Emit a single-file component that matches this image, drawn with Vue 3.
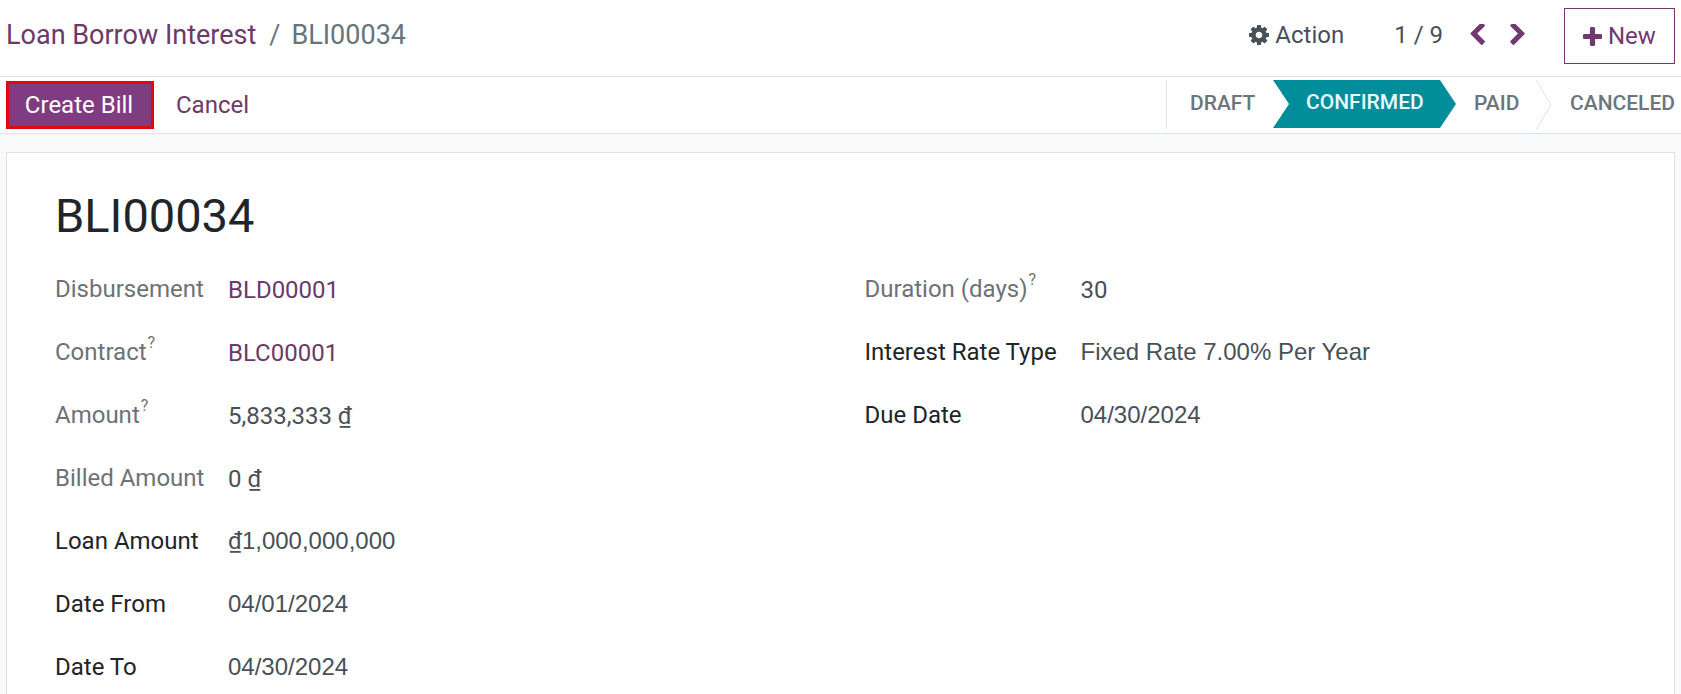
<template>
  <div class="page">
    <header class="top">
      <nav class="crumbs">
        <span class="crumb-link">Loan Borrow Interest</span>
        <span class="crumb-sep">/</span>
        <span class="crumb-cur">BLI00034</span>
      </nav>
      <div class="top-right">
        <span class="action">
          <svg class="gear" viewBox="128 128 1536 1536" width="20" height="20"><path fill="#495057" d="M1152 896q0-106-75-181t-181-75-181 75-75 181 75 181 181 75 181-75 75-181zm512-109v222q0 12-8 23t-20 13l-185 28q-19 54-39 91 35 50 107 138 10 12 10 25t-9 23q-27 37-99 108t-94 71q-12 0-26-9l-138-108q-44 23-91 38-16 136-29 186-7 28-36 28h-222q-14 0-24.500-8.500t-11.500-21.500l-28-184q-49-16-90-37l-141 107q-10 9-25 9-14 0-25-11-126-114-165-168-7-10-7-23 0-12 8-23 15-21 51-66.500t54-70.500q-27-50-41-99l-183-27q-13-2-21-12.500t-8-23.500v-222q0-12 8-23t19-13l186-28q14-46 39-92-40-57-107-138-10-12-10-24 0-10 9-23 26-36 98.500-107.500t94.500-71.500q13 0 26 10l138 107q44-23 91-38 16-136 29-186 7-28 36-28h222q14 0 24.500 8.500t11.500 21.500l28 184q49 16 90 37l142-107q9-9 24-9 13 0 25 10 129 119 165 170 7 8 7 22 0 12-8 23-15 21-51 66.500t-54 70.500q26 50 41 98l183 28q13 2 21 12.500t8 23.500z"/></svg>
          Action
        </span>
        <span class="pager">1 / 9</span>
        <svg class="chev" viewBox="384 148 1062 1496" width="15" height="21"><path fill="#71396f" d="M1427 301l-531 531 531 531q19 19 19 45t-19 45l-166 166q-19 19-45 19t-45-19l-742-742q-19-19-19-45t19-45l742-742q19-19 45-19t45 19l166 166q19 19 19 45t-19 45z"/></svg>
        <svg class="chev chev2" viewBox="346 148 1040 1496" width="15" height="21"><path fill="#71396f" d="M1363 877l-742 742q-19 19-45 19t-45-19l-166-166q-19-19-19-45t19-45l531-531-531-531q-19-19-19-45t19-45l166-166q19-19 45-19t45 19l742 742q19 19 19 45t-19 45z"/></svg>
        <button class="new">
          <svg viewBox="192 128 1408 1408" width="19" height="19"><path fill="#71396f" d="M1600 736v192q0 40-28 68t-68 28h-416v416q0 40-28 68t-68 28h-192q-40 0-68-28t-28-68v-416h-416q-40 0-68-28t-28-68v-192q0-40 28-68t68-28h416v-416q0-40 28-68t68-28h192q40 0 68 28t28 68v416h416q40 0 68 28t28 68z"/></svg>
          New
        </button>
      </div>
    </header>
    <div class="bar">
      <div class="bar-left">
        <button class="primary">Create Bill</button>
        <button class="link">Cancel</button>
      </div>
      <div class="status">
        <span class="st st-draft">DRAFT</span>
        <span class="st st-conf">CONFIRMED</span>
        <span class="st st-paid">PAID</span>
        <svg class="sep" viewBox="0 0 18 50" width="18" height="50"><path d="M1 0 16 25 1 50" fill="none" stroke="#dee2e6" stroke-width="1"/></svg>
        <span class="st st-canc">CANCELED</span>
      </div>
    </div>
    <main class="content">
      <section class="sheet">
        <h1 class="title">BLI00034</h1>
        <div class="cols">
          <div class="col">
            <div v-for="r in left" :key="r.label" class="row">
              <span class="label" :class="{ muted: r.muted }">{{ r.label }}<sup v-if="r.help">?</sup></span>
              <span class="value" :class="{ vlink: r.link, alt: r.alt }"><u v-if="r.pre" class="cur">₫</u>{{ r.value }}<template v-if="r.cur">&nbsp;<u class="cur">₫</u></template></span>
            </div>
          </div>
          <div class="col col2">
            <div v-for="r in right" :key="r.label" class="row">
              <span class="label label2" :class="{ muted: r.muted }">{{ r.label }}<sup v-if="r.help">?</sup></span>
              <span class="value" :class="{ alt: r.alt }">{{ r.value }}</span>
            </div>
          </div>
        </div>
      </section>
    </main>
  </div>
</template>

<script setup>
const left = [
  { label: 'Disbursement', value: 'BLD00001', muted: true, link: true },
  { label: 'Contract', value: 'BLC00001', muted: true, help: true, link: true },
  { label: 'Amount', value: '5,833,333', muted: true, help: true, cur: true },
  { label: 'Billed Amount', value: '0', muted: true, cur: true },
  { label: 'Loan Amount', value: '1,000,000,000', pre: true, alt: true },
  { label: 'Date From', value: '04/01/2024', alt: true },
  { label: 'Date To', value: '04/30/2024', alt: true }
]
const right = [
  { label: 'Duration (days)', value: '30', muted: true, help: true },
  { label: 'Interest Rate Type', value: 'Fixed Rate 7.00% Per Year', alt: true },
  { label: 'Due Date', value: '04/30/2024', alt: true }
]
</script>

<style>
html, body { margin: 0; background: #fff; overflow: hidden; }
</style>

<style scoped>
.page {
  width: 1681px;
  height: 694px;
  overflow: hidden;
  font-family: Roboto, sans-serif;
  color: #212529;
  background: #f8f9fa;
}
.top {
  height: 76px;
  background: #fff;
  border-bottom: 1px solid #dee2e6;
  display: flex;
  align-items: center;
  justify-content: space-between;
  padding-left: 6px;
  box-sizing: content-box;
}
.crumbs { font-size: 27px; display: flex; margin-top: -7px; }
.crumb-link { color: #6b3a68; }
.crumb-sep { color: #6c757d; margin: 0 11px 0 13px; }
.crumb-cur { color: #66757c; }
.top-right { display: flex; align-items: center; font-size: 24px; color: #495057; height: 100%; }
.action { display: flex; align-items: center; gap: 6px; margin-right: 50px; margin-top: -6px; }
.pager { margin-right: 27px; margin-top: -6px; }
.chev { margin-top: -7px; }
.chev2 { margin-left: 25px; margin-right: 39px; }
.new {
  width: 111px;
  height: 56px;
  margin: -4px 6px 0 0;
  background: #fff;
  border: 1px solid #71396f;
  color: #71396f;
  font: inherit;
  display: flex;
  align-items: center;
  gap: 6px;
  padding: 0 0 0 18px;
  box-sizing: border-box;
}
.bar {
  height: 56px;
  background: #fff;
  border-bottom: 1px solid #dee2e6;
  display: flex;
  justify-content: space-between;
  align-items: flex-start;
}
.bar-left { display: flex; align-items: center; margin-left: 6px; margin-top: 4px; }
.primary {
  width: 148px;
  height: 48px;
  box-sizing: border-box;
  background: #7f3c80;
  border: 3px solid #e30713;
  color: #fff;
  font: inherit;
  font-size: 24px;
  padding: 0 2px 0 0;
}
.link {
  background: none;
  border: 0;
  font: inherit;
  font-size: 24px;
  color: #6b3a68;
  padding: 0;
  margin-left: 22px;
}
.status {
  display: flex;
  align-items: center;
  height: 49px;
  margin-top: 3px;
  border-left: 1px solid #dee2e6;
  font-size: 21px;
  font-weight: 500;
  color: #6c757d;
  width: 515px;
  box-sizing: border-box;
}
.st { display: block; white-space: nowrap; }
.st-draft { margin: 0 0 4px 23px; width: 83px; }
.st-conf {
  width: 183px;
  height: 48px;
  align-self: flex-start;
  line-height: 45px;
  box-sizing: border-box;
  padding-left: 33px;
  background: #018d99;
  color: #e9fbfc;
  clip-path: polygon(0 0, 167px 0, 100% 50%, 167px 100%, 0 100%, 16px 50%);
}
.st-paid { margin: 0 0 4px 18px; width: 61px; }
.sep { flex: none; }
.st-canc { margin: 0 0 4px 17px; }
.content { padding: 18px 0 0 6px; }
.sheet {
  background: #fff;
  border: 1px solid #dee2e6;
  width: 1669px;
  height: 600px;
  box-sizing: border-box;
  padding: 0 0 0 48px;
}
.title {
  margin: 35px 0 0;
  font-size: 47px;
  font-weight: 400;
  line-height: 56px;
  color: #212529;
}
.cols { display: flex; margin-top: 13px; }
.col { width: 811px; }
.row { display: flex; height: 63px; align-items: center; font-size: 24px; }
.label { width: 173px; flex: none; color: #212529; font-weight: 400; white-space: nowrap; }
.label2 { width: 216px; }
.muted { color: #6e7276; }
.label sup { font-size: 16px; font-weight: 400; line-height: 0; vertical-align: baseline; position: relative; top: -12px; margin-left: 1px; }
.value { color: #495057; white-space: nowrap; padding-top: 2px; }
.alt { font-family: "Liberation Sans", Arial, sans-serif; padding-top: 0; }
.cur { font-family: Roboto, sans-serif; }
.vlink { color: #6b3a68; }
</style>
